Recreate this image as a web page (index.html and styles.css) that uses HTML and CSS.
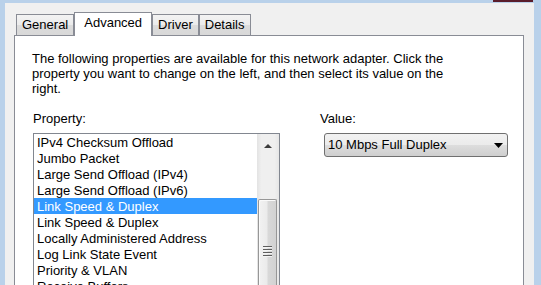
FILE: index.html
```html
<!DOCTYPE html>
<html lang="en">
<head>
    <meta charset="UTF-8">
    <meta name="viewport" content="width=device-width, initial-scale=1.0">
    <title>Network Adapter Properties</title>
    <link rel="stylesheet" href="styles.css">
</head>
<body>
    <div class="close-button"></div>
    <div class="window">
        <div class="tabs">
            <div class="tab">General</div>
            <div class="tab active">Advanced</div>
            <div class="tab">Driver</div>
            <div class="tab">Details</div>
        </div>
        <div class="panel">
            <p class="intro">The following properties are available for this network adapter. Click the property you want to change on the left, and then select its value on the right.</p>
            <div class="fields">
                <div class="field">
                    <label class="field-label">Property:</label>
                    <div class="listbox">
                        <ul class="items">
                            <li>IPv4 Checksum Offload</li>
                            <li>Jumbo Packet</li>
                            <li>Large Send Offload (IPv4)</li>
                            <li>Large Send Offload (IPv6)</li>
                            <li class="selected">Link Speed &amp; Duplex</li>
                            <li>Link Speed &amp; Duplex</li>
                            <li>Locally Administered Address</li>
                            <li>Log Link State Event</li>
                            <li>Priority &amp; VLAN</li>
                            <li>Receive Buffers</li>
                        </ul>
                        <div class="scrollbar">
                            <div class="scroll-up">
                                <svg width="8" height="4" viewBox="0 0 8 4"><polygon points="0,4 8,4 4,0" fill="#3c3c3c"/></svg>
                            </div>
                            <div class="scroll-track"></div>
                            <div class="scroll-thumb">
                                <div class="grip"></div>
                            </div>
                        </div>
                    </div>
                </div>
                <div class="field">
                    <label class="field-label">Value:</label>
                    <div class="dropdown">
                        <span>10 Mbps Full Duplex</span>
                        <svg class="arrow" width="9" height="5" viewBox="0 0 9 5"><polygon points="0,0 9,0 4.5,5" fill="#000"/></svg>
                    </div>
                </div>
            </div>
        </div>
    </div>
</body>
</html>
```

FILE: styles.css
```css
html, body {
    height: 100%;
}

body {
    margin: 0;
    background-color: #b9d1ea;
    font-family: "Liberation Sans", Arial, sans-serif;
    font-size: 13px;
    color: #000;
    overflow: hidden;
    position: relative;
}

.close-button {
    position: absolute;
    top: 0;
    left: 493px;
    width: 40px;
    height: 2px;
    background-color: #5a1d2b;
}

.window {
    box-sizing: border-box;
    width: 529px;
    height: calc(100% - 3px);
    margin: 3px 0 0 5px;
    padding: 9px 10px 0 9px;
    background-color: #f0f0f0;
    display: flex;
    flex-direction: column;
}

/* tabs */
.tabs {
    display: flex;
    align-items: flex-end;
    padding-left: 2px;
}

.tab {
    height: 21px;
    box-sizing: border-box;
    padding: 2px 5px 0;
    line-height: 15px;
    border: 1px solid #898c95;
    border-bottom: none;
    background: linear-gradient(#f3f3f3, #ebebeb 50%, #dcdcdc 51%, #d8d8d8);
    white-space: nowrap;
}

.tab.active {
    height: 24px;
    margin-bottom: -1px;
    padding: 2px 9px 0;
    background: #fff;
    position: relative;
    z-index: 1;
}

/* panel */
.panel {
    flex: 1;
    border: 1px solid #898c95;
    border-bottom: none;
    background-color: #fff;
    padding: 15px 17px 0;
    overflow: hidden;
}

.intro {
    margin: 0 0 15px;
    max-width: 424px;
    line-height: 15px;
    padding-top: 1px;
    margin-top: -1px;
}

.fields {
    display: grid;
    grid-template-columns: 247px 1fr;
    column-gap: 40px;
    margin-left: 1px;
}

.field-label {
    display: block;
    line-height: 15px;
    margin-bottom: 7px;
}

/* property list */
.listbox {
    display: flex;
    border: 1px solid #828790;
    border-bottom: none;
}

.items {
    flex: 1;
    list-style: none;
    margin: 0;
    padding: 0;
}

.items li {
    height: 16px;
    line-height: 18px;
    padding-left: 3px;
    white-space: nowrap;
}

.items li.selected {
    background-color: #3399ff;
    color: #fff;
}

.scrollbar {
    width: 22px;
    display: flex;
    flex-direction: column;
    background: linear-gradient(to right, #e3e3e3, #efefef 20%, #efefef 80%, #e6e6e6);
}

.scroll-up {
    height: 21px;
    display: flex;
    align-items: center;
    justify-content: center;
    padding-top: 3px;
    box-sizing: border-box;
}

.scroll-track {
    height: 44px;
}

.scroll-thumb {
    flex: 1;
    margin: 0 2px 0 1px;
    border: 1px solid #979797;
    border-bottom: none;
    border-radius: 2px 2px 0 0;
    background: linear-gradient(to right, #f2f2f2, #ebebeb 45%, #d8d8d8 55%, #d2d2d2);
    box-shadow: inset 1px 1px 0 #fafafa;
    display: flex;
    justify-content: center;
    padding-top: 46px;
    box-sizing: border-box;
}

.grip {
    width: 9px;
    height: 11px;
    background: repeating-linear-gradient(#5e5e5e 0 1px, #f4f4f4 1px 2px, transparent 2px 3px);
}

/* value dropdown */
.dropdown {
    box-sizing: border-box;
    width: 184px;
    height: 24px;
    margin-left: 4px;
    padding: 3px 4px 0 3px;
    line-height: 15px;
    border: 1px solid #707070;
    border-radius: 3px;
    background: linear-gradient(#f2f2f2, #ebebeb 50%, #dddddd 51%, #cfcfcf);
    display: flex;
    justify-content: space-between;
}

.dropdown .arrow {
    margin-top: 6px;
}
```
